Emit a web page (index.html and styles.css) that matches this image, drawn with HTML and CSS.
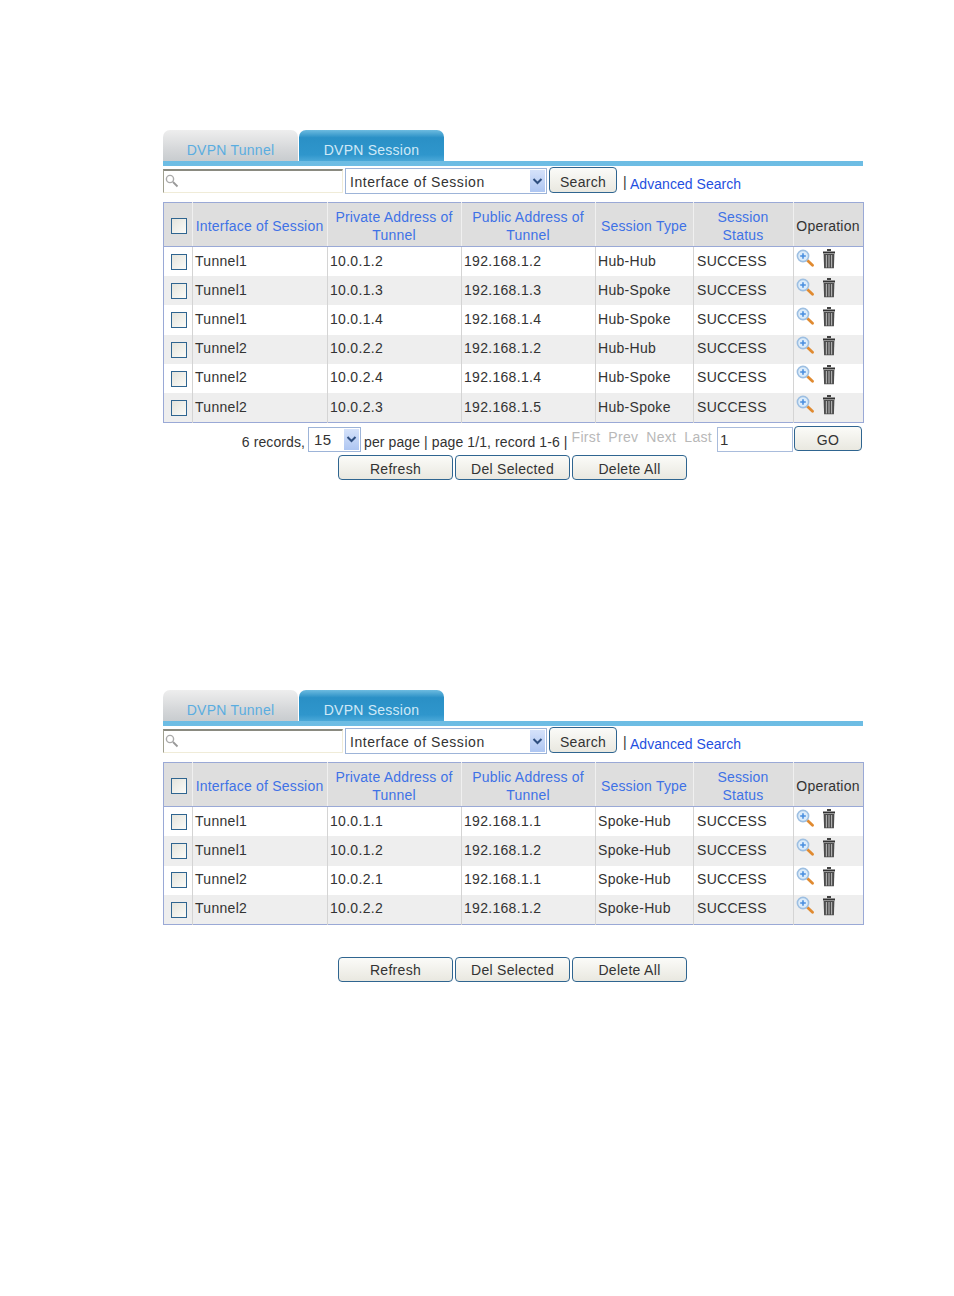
FILE: index.html
```html
<!DOCTYPE html>
<html lang="en">
<head>
    <meta charset="UTF-8">
    <title>DVPN Session</title>
    <link rel="stylesheet" href="styles.css">
</head>
<body>
    <svg class="defs" width="0" height="0">
        <symbol id="zoom" viewBox="0 0 18 18">
            <path d="M11.5 11.5l5 4.8" stroke="#e08a30" stroke-width="2.8" stroke-linecap="round"/>
            <circle cx="7" cy="7" r="5.6" fill="#dcecfa" stroke="#9dbfe2" stroke-width="1.6"/>
            <path d="M7 4.2v5.6M4.2 7h5.6" stroke="#4a8fe0" stroke-width="1.6"/>
        </symbol>
        <symbol id="trash" viewBox="0 0 14 20">
            <path d="M5 1h4" stroke="#444" stroke-width="2"/>
            <path d="M1 3.5h12" stroke="#333" stroke-width="2"/>
            <path d="M1.6 5h10.8l-.5 14.2H2.1z" fill="#4c4c4c"/>
            <path d="M4.4 6v12.4M7 6v12.4M9.6 6v12.4" stroke="#b4b4b4" stroke-width="1.1"/>
        </symbol>
    </svg>

    <section class="panel">
        <div class="tabs">
            <a class="tab">DVPN Tunnel</a>
            <a class="tab active">DVPN Session</a>
        </div>
        <div class="toolbar">
            <div class="search-box">
                <svg width="14" height="14" viewBox="0 0 14 14"><circle cx="5" cy="5" r="3.6" fill="none" stroke="#aaa" stroke-width="1.4"/><path d="M8 8l4.5 4.5" stroke="#999" stroke-width="1.8"/></svg>
            </div>
            <div class="select field-select"><span>Interface of Session</span><i class="arrow"><svg width="11" height="7" viewBox="0 0 11 7"><path d="M1.5 1l4 4 4-4" fill="none" stroke="#2f4f80" stroke-width="2"/></svg></i></div>
            <button class="btn search-btn">Search</button>
            <span class="sep">|</span>
            <a class="adv">Advanced Search</a>
        </div>
        <table class="grid">
            <colgroup><col class="c1"><col class="c2"><col class="c3"><col class="c4"><col class="c5"><col class="c6"><col class="c7"></colgroup>
            <thead>
                <tr>
                    <th><span class="check"></span></th>
                    <th>Interface of Session</th>
                    <th>Private Address of Tunnel</th>
                    <th>Public Address of Tunnel</th>
                    <th>Session Type</th>
                    <th>Session<br>Status</th>
                    <th class="op-head">Operation</th>
                </tr>
            </thead>
            <tbody>
                <tr><td><span class="check"></span></td><td>Tunnel1</td><td>10.0.1.2</td><td>192.168.1.2</td><td>Hub-Hub</td><td>SUCCESS</td><td class="ops"><svg class="i-zoom"><use href="#zoom"/></svg><svg class="i-trash"><use href="#trash"/></svg></td></tr>
                <tr><td><span class="check"></span></td><td>Tunnel1</td><td>10.0.1.3</td><td>192.168.1.3</td><td>Hub-Spoke</td><td>SUCCESS</td><td class="ops"><svg class="i-zoom"><use href="#zoom"/></svg><svg class="i-trash"><use href="#trash"/></svg></td></tr>
                <tr><td><span class="check"></span></td><td>Tunnel1</td><td>10.0.1.4</td><td>192.168.1.4</td><td>Hub-Spoke</td><td>SUCCESS</td><td class="ops"><svg class="i-zoom"><use href="#zoom"/></svg><svg class="i-trash"><use href="#trash"/></svg></td></tr>
                <tr><td><span class="check"></span></td><td>Tunnel2</td><td>10.0.2.2</td><td>192.168.1.2</td><td>Hub-Hub</td><td>SUCCESS</td><td class="ops"><svg class="i-zoom"><use href="#zoom"/></svg><svg class="i-trash"><use href="#trash"/></svg></td></tr>
                <tr><td><span class="check"></span></td><td>Tunnel2</td><td>10.0.2.4</td><td>192.168.1.4</td><td>Hub-Spoke</td><td>SUCCESS</td><td class="ops"><svg class="i-zoom"><use href="#zoom"/></svg><svg class="i-trash"><use href="#trash"/></svg></td></tr>
                <tr><td><span class="check"></span></td><td>Tunnel2</td><td>10.0.2.3</td><td>192.168.1.5</td><td>Hub-Spoke</td><td>SUCCESS</td><td class="ops"><svg class="i-zoom"><use href="#zoom"/></svg><svg class="i-trash"><use href="#trash"/></svg></td></tr>
            </tbody>
        </table>
        <div class="pager">
            <span class="records">6 records,</span>
            <div class="select size-select"><span>15</span><i class="arrow"><svg width="11" height="7" viewBox="0 0 11 7"><path d="M1.5 1l4 4 4-4" fill="none" stroke="#2f4f80" stroke-width="2"/></svg></i></div>
            <span class="pager-info">per page | page 1/1, record 1-6 |</span>
            <span class="nav"><a>First</a><a>Prev</a><a>Next</a><a>Last</a></span>
            <div class="page-input">1</div>
            <button class="btn go-btn">GO</button>
        </div>
        <div class="actions">
            <button class="btn">Refresh</button>
            <button class="btn">Del Selected</button>
            <button class="btn">Delete All</button>
        </div>
    </section>

    <section class="panel second">
        <div class="tabs">
            <a class="tab">DVPN Tunnel</a>
            <a class="tab active">DVPN Session</a>
        </div>
        <div class="toolbar">
            <div class="search-box">
                <svg width="14" height="14" viewBox="0 0 14 14"><circle cx="5" cy="5" r="3.6" fill="none" stroke="#aaa" stroke-width="1.4"/><path d="M8 8l4.5 4.5" stroke="#999" stroke-width="1.8"/></svg>
            </div>
            <div class="select field-select"><span>Interface of Session</span><i class="arrow"><svg width="11" height="7" viewBox="0 0 11 7"><path d="M1.5 1l4 4 4-4" fill="none" stroke="#2f4f80" stroke-width="2"/></svg></i></div>
            <button class="btn search-btn">Search</button>
            <span class="sep">|</span>
            <a class="adv">Advanced Search</a>
        </div>
        <table class="grid">
            <colgroup><col class="c1"><col class="c2"><col class="c3"><col class="c4"><col class="c5"><col class="c6"><col class="c7"></colgroup>
            <thead>
                <tr>
                    <th><span class="check"></span></th>
                    <th>Interface of Session</th>
                    <th>Private Address of Tunnel</th>
                    <th>Public Address of Tunnel</th>
                    <th>Session Type</th>
                    <th>Session<br>Status</th>
                    <th class="op-head">Operation</th>
                </tr>
            </thead>
            <tbody>
                <tr><td><span class="check"></span></td><td>Tunnel1</td><td>10.0.1.1</td><td>192.168.1.1</td><td>Spoke-Hub</td><td>SUCCESS</td><td class="ops"><svg class="i-zoom"><use href="#zoom"/></svg><svg class="i-trash"><use href="#trash"/></svg></td></tr>
                <tr><td><span class="check"></span></td><td>Tunnel1</td><td>10.0.1.2</td><td>192.168.1.2</td><td>Spoke-Hub</td><td>SUCCESS</td><td class="ops"><svg class="i-zoom"><use href="#zoom"/></svg><svg class="i-trash"><use href="#trash"/></svg></td></tr>
                <tr><td><span class="check"></span></td><td>Tunnel2</td><td>10.0.2.1</td><td>192.168.1.1</td><td>Spoke-Hub</td><td>SUCCESS</td><td class="ops"><svg class="i-zoom"><use href="#zoom"/></svg><svg class="i-trash"><use href="#trash"/></svg></td></tr>
                <tr><td><span class="check"></span></td><td>Tunnel2</td><td>10.0.2.2</td><td>192.168.1.2</td><td>Spoke-Hub</td><td>SUCCESS</td><td class="ops"><svg class="i-zoom"><use href="#zoom"/></svg><svg class="i-trash"><use href="#trash"/></svg></td></tr>
            </tbody>
        </table>
        <div class="actions spaced">
            <button class="btn">Refresh</button>
            <button class="btn">Del Selected</button>
            <button class="btn">Delete All</button>
        </div>
    </section>
</body>
</html>
```

FILE: styles.css
```css
/* Page */
body {
    margin: 0;
    padding: 130px 0 0 163px;
    background: #fff;
    color: #333;
    font-family: "Liberation Sans", Arial, sans-serif;
    font-size: 14px;
    letter-spacing: 0.3px;
}

.defs {
    position: absolute;
}

.panel {
    width: 700px;
}

.second {
    margin-top: 210px;
}

/* Tabs */
.tabs {
    display: flex;
    gap: 1px;
    height: 31px;
    border-bottom: 5px solid;
    border-image: linear-gradient(to bottom, #3fa3d4, #6ebde4) 1;
}

.tab {
    box-sizing: border-box;
    width: 135px;
    height: 31px;
    padding-top: 12px;
    text-align: center;
    border-radius: 7px 7px 0 0;
    background: linear-gradient(to bottom, #eeeeee 0, #d6d8da 60%, #c8cccf 100%);
    color: #5aade0;
    letter-spacing: 0.25px;
}

.tab.active {
    width: 145px;
    background: linear-gradient(to bottom, #6dbbe0 0, #2a90c6 25%, #2f96cc 80%, #4aa8d8 100%);
    color: #cfe9f7;
}

/* Toolbar */
.toolbar {
    display: flex;
    align-items: flex-start;
    height: 35px;
    padding-top: 1px;
}

.search-box {
    box-sizing: border-box;
    width: 180px;
    height: 24px;
    margin-top: 2px;
    padding: 3px 0 0 1px;
    border: 1px solid #f0ecd8;
    border-top: 2px solid #8a8a80;
    border-left: 1px solid #a0a090;
}

.select {
    box-sizing: border-box;
    display: flex;
    justify-content: space-between;
    align-items: center;
    border: 1px solid #9db4d8;
    background: #fff;
}

.field-select {
    width: 202px;
    height: 26px;
    margin: 1px 0 0 2px;
    padding-left: 4px;
    letter-spacing: 0.55px;
}

.field-select span {
    padding-top: 2px;
}

.arrow {
    display: flex;
    justify-content: center;
    align-items: center;
    width: 17px;
    height: 100%;
    border: 1px solid #fff;
    box-sizing: border-box;
    background: linear-gradient(to bottom, #d5e2fa, #aec6f2);
}

.btn {
    box-sizing: border-box;
    width: 115px;
    height: 25px;
    padding: 2px 0 0;
    border: 1px solid #2f6590;
    border-radius: 4px;
    background: linear-gradient(to bottom, #fbfbf8, #e9e8e0);
    color: #333;
    font-family: inherit;
    font-size: 14px;
    letter-spacing: 0.3px;
}

.search-btn {
    width: 68px;
    height: 26px;
    margin-left: 2px;
    padding-top: 4px;
}

.sep {
    margin: 7px 0 0 6px;
}

.adv {
    margin: 9px 0 0 3px;
    color: #1f4fe0;
    letter-spacing: 0.05px;
}

/* Table */
.grid {
    box-sizing: border-box;
    width: 700px;
    table-layout: fixed;
    border-collapse: collapse;
    border: 1px solid #9aa9d6;
}

.c1 { width: 29px; }
.c2 { width: 135px; }
.c3 { width: 134px; }
.c4 { width: 134px; }
.c5 { width: 98px; }
.c6 { width: 100px; }
.c7 { width: 70px; }

.grid th {
    height: 40px;
    padding: 3px 1px 0 0;
    background: #dedede;
    border-left: 1px solid #f0f0f0;
    border-bottom: 1px solid #9aa9d6;
    color: #3f72e6;
    font-weight: normal;
    line-height: 18px;
    letter-spacing: 0.2px;
}

.grid th.op-head {
    color: #333;
}

.grid td {
    height: 27.2px;
    padding: 0 0 2px 2px;
    border-left: 1px solid #d4d4d4;
    line-height: 18px;
}

.grid td:first-child,
.grid th:first-child {
    padding: 0 0 0 1px;
    text-align: center;
    border-left: none;
}

.grid td:first-child {
    padding-bottom: 2px;
}

.grid td:nth-child(6) {
    padding-left: 3px;
}

.grid tbody tr:nth-child(even) {
    background: #eeeeee;
}

.check {
    box-sizing: border-box;
    display: inline-block;
    width: 16px;
    height: 16px;
    margin-top: 1px;
    vertical-align: middle;
    border: 1px solid #2f6590;
    background: linear-gradient(135deg, #e4e4dc, #fbfbf8);
}

.ops {
    white-space: nowrap;
}

.i-zoom {
    width: 18px;
    height: 18px;
    margin: 0 8px 6px 0;
    vertical-align: middle;
}

.i-trash {
    width: 14px;
    height: 20px;
    margin-bottom: 4px;
    vertical-align: middle;
}

/* Pager */
.pager {
    display: flex;
    align-items: flex-start;
    justify-content: flex-end;
    height: 32px;
    padding: 3px 1px 0 0;
    box-sizing: border-box;
    letter-spacing: 0.1px;
}

.records {
    margin-top: 8px;
}

.size-select {
    width: 53px;
    height: 25px;
    margin: 1px 3px 0 3px;
    padding-left: 5px;
    font-size: 15px;
    letter-spacing: 0.3px;
}

.pager-info {
    margin-top: 8px;
}

.nav {
    display: flex;
    gap: 8px;
    margin: 3px 5px 0 4px;
    color: #b8b8b8;
    letter-spacing: 0.3px;
}

.page-input {
    box-sizing: border-box;
    width: 76px;
    height: 25px;
    margin-top: 1px;
    padding: 3px 0 0 2px;
    border: 1px solid #a9bcdc;
    font-size: 15px;
}

.go-btn {
    width: 68px;
    margin-left: 1px;
}

/* Actions */
.actions {
    display: flex;
    justify-content: center;
    gap: 2px;
    padding-right: 1px;
}

.actions.spaced {
    margin-top: 32px;
}
```
